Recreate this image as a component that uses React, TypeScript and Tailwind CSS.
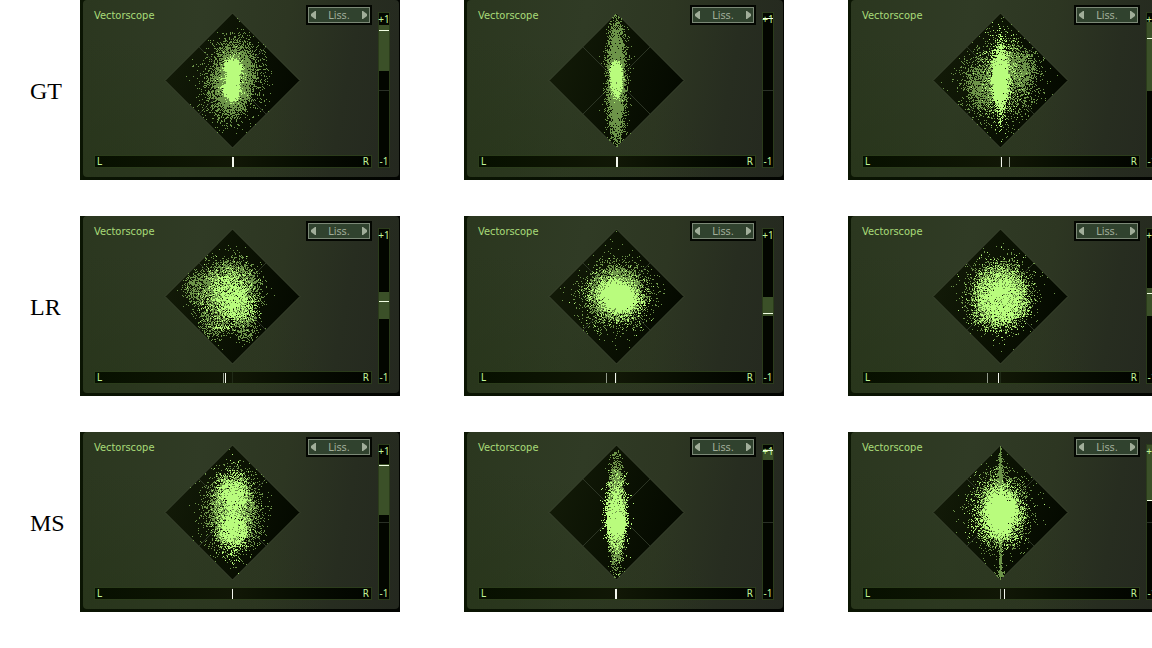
import { useMemo } from "react";

type Tone = "dim" | "bright";

/** A soft-edged ellipse of lit pixels, in pixels from the scope's centre. */
type Blob = {
  tone: Tone;
  x: number;
  y: number;
  rx: number;
  ry: number;
  soft: number;
  fill: number;
  tilt?: number;
};

type Marker = { at: number; width?: number; faint?: boolean };

type Scope = {
  id: string;
  seed: number;
  blobs: Blob[];
  balance: Marker[];
  range?: [number, number];
  level: number;
};

const blob = (
  tone: Tone,
  x: number,
  y: number,
  rx: number,
  ry: number,
  soft: number,
  fill: number,
  tilt = 0,
): Blob => ({ tone, x, y, rx, ry, soft, fill, tilt });

const ROWS: { label: string; scopes: Scope[] }[] = [
  {
    label: "GT",
    scopes: [
      {
        id: "gt-1",
        seed: 11,
        blobs: [
          blob("dim", 1, -1, 29, 41, 0.14, 0.36, -0.2),
          blob("dim", 0, -2, 20, 36, 0.12, 0.6, -0.15),
          blob("dim", 1, 0, 17, 29, 0.1, 0.75, -0.1),
          blob("bright", 0, -3, 12, 22, 0.1, 0.3),
          blob("bright", 0, -13, 9, 9, 0.08, 1),
          blob("bright", 0, -4, 7, 12, 0.1, 1),
          blob("bright", -1, 9, 9, 9, 0.08, 1),
          blob("bright", 0, 16, 6, 5, 0.1, 1),
        ],
        balance: [{ at: 152, width: 2 }],
        range: [25, 71],
        level: 30,
      },
      {
        id: "gt-2",
        seed: 22,
        blobs: [
          blob("dim", 0, 0, 11, 64, 0.14, 0.45),
          blob("dim", 0, 0, 8, 58, 0.1, 0.95),
          blob("bright", 0, -9, 7, 11, 0.07, 0.7),
          blob("bright", 0, 0, 6, 18, 0.08, 0.98),
        ],
        balance: [{ at: 152, width: 2 }],
        level: 18,
      },
      {
        id: "gt-3",
        seed: 33,
        blobs: [
          blob("dim", 0, 0, 34, 38, 0.16, 0.4, -0.4),
          blob("dim", 16, -10, 17, 20, 0.13, 0.72),
          blob("dim", -17, 5, 16, 20, 0.13, 0.6),
          blob("bright", 0, -4, 17, 36, 0.2, 0.16),
          blob("bright", 0, -3, 9, 32, 0.12, 0.85),
          blob("bright", 0, 1, 8, 22, 0.1, 0.98),
          blob("bright", 0, 0, 2, 48, 0.14, 0.5),
        ],
        balance: [{ at: 153 }, { at: 161, faint: true }],
        range: [22, 91],
        level: 38,
      },
    ],
  },
  {
    label: "LR",
    scopes: [
      {
        id: "lr-1",
        seed: 44,
        blobs: [
          blob("dim", -6, -2, 32, 35, 0.11, 0.36),
          blob("dim", -34, -8, 13, 15, 0.14, 0.55),
          blob("dim", 0, -8, 25, 27, 0.1, 0.6),
          blob("dim", -18, 26, 13, 17, 0.12, 0.4),
          blob("dim", 13, 26, 11, 18, 0.13, 0.5),
          blob("bright", -4, 0, 25, 27, 0.13, 0.22),
          blob("bright", -2, -4, 17, 18, 0.12, 0.6),
          blob("bright", 6, 10, 15, 14, 0.12, 0.55),
          blob("bright", -10, 31, 11, 2, 0.2, 0.45),
        ],
        balance: [{ at: 143, faint: true }, { at: 145 }],
        range: [76, 103],
        level: 85,
      },
      {
        id: "lr-2",
        seed: 55,
        blobs: [
          blob("dim", 0, -1, 32, 30, 0.18, 0.42),
          blob("dim", 0, -3, 25, 26, 0.11, 0.8, -0.4),
          blob("bright", 0, 0, 27, 22, 0.15, 0.3, -0.4),
          blob("bright", 1, 0, 20, 16, 0.12, 0.85, -0.4),
          blob("bright", 3, 1, 16, 13, 0.08, 1, -0.4),
        ],
        balance: [{ at: 142, faint: true }, { at: 151 }],
        range: [81, 100],
        level: 97,
      },
      {
        id: "lr-3",
        seed: 66,
        blobs: [
          blob("dim", 0, -1, 31, 34, 0.14, 0.42),
          blob("dim", 0, 0, 26, 29, 0.1, 0.75),
          blob("bright", 0, 1, 27, 32, 0.12, 0.3),
          blob("bright", 0, 2, 22, 25, 0.12, 0.58),
          blob("bright", 0, 3, 15, 17, 0.15, 0.65),
        ],
        balance: [{ at: 139, faint: true }, { at: 150 }],
        range: [72, 100],
        level: 77,
      },
    ],
  },
  {
    label: "MS",
    scopes: [
      {
        id: "ms-1",
        seed: 77,
        blobs: [
          blob("dim", 0, 0, 27, 39, 0.17, 0.42),
          blob("dim", 0, -1, 21, 35, 0.1, 0.72),
          blob("bright", 0, 0, 18, 40, 0.11, 0.3),
          blob("bright", 0, -18, 14, 15, 0.14, 0.75),
          blob("bright", 1, 17, 13, 14, 0.14, 0.82),
          blob("bright", 0, 0, 7, 20, 0.14, 0.55),
        ],
        balance: [{ at: 152 }],
        range: [32, 83],
        level: 33,
      },
      {
        id: "ms-2",
        seed: 88,
        blobs: [
          blob("dim", 0, 0, 7, 62, 0.12, 0.5),
          blob("dim", 0, 0, 9, 47, 0.1, 0.85),
          blob("bright", 0, 2, 12, 36, 0.15, 0.36),
          blob("bright", 0, 4, 9, 29, 0.12, 0.62),
          blob("bright", 0, 8, 9, 16, 0.12, 0.9),
        ],
        balance: [{ at: 151, width: 2 }],
        range: [17, 28],
        level: 18,
      },
      {
        id: "ms-3",
        seed: 99,
        blobs: [
          blob("dim", 0, -2, 27, 36, 0.17, 0.42),
          blob("dim", 0, -2, 19, 32, 0.12, 0.65),
          blob("dim", 0, 0, 2, 68, 0.08, 0.95),
          blob("dim", 0, 62, 4, 6, 0.2, 0.8),
          blob("dim", 0, -40, 3, 12, 0.2, 0.8),
          blob("bright", -1, 0, 24, 29, 0.13, 0.36),
          blob("bright", 0, 1, 17, 24, 0.11, 0.82),
          blob("bright", 0, 1, 13, 19, 0.1, 1),
        ],
        balance: [{ at: 152, faint: true }, { at: 156 }],
        range: [13, 69],
        level: 68,
      },
    ],
  },
];

const RADIUS = 67;
const BAR_START = 15;
const METER_START = 13;

function createRandom(seed: number) {
  let state = seed * 2654435761;
  return () => {
    state = (state + 0x6d2b79f5) | 0;
    let t = Math.imul(state ^ (state >>> 15), 1 | state);
    t = (t + Math.imul(t ^ (t >>> 7), 61 | t)) ^ t;
    return ((t ^ (t >>> 14)) >>> 0) / 4294967296;
  };
}

/** Lights pixels inside the diamond and returns one path per tone. */
function plot(scope: Scope): Record<Tone, string> {
  const random = createRandom(scope.seed);
  const paths: Record<Tone, string> = { dim: "", bright: "" };
  for (let y = -RADIUS; y <= RADIUS; y++) {
    for (let x = -RADIUS; x <= RADIUS; x++) {
      if (Math.abs(x) + Math.abs(y) > RADIUS) continue;
      let tone: Tone | null = null;
      for (const b of scope.blobs) {
        const c = Math.cos(b.tilt ?? 0);
        const s = Math.sin(b.tilt ?? 0);
        const dx = x - b.x;
        const dy = y - b.y;
        const r = Math.hypot((dx * c - dy * s) / b.rx, (dx * s + dy * c) / b.ry);
        if (random() < b.fill / (1 + Math.exp((r - 1) / b.soft))) tone = b.tone;
      }
      if (tone) paths[tone] += `M${x + RADIUS} ${y + RADIUS}h1v1h-1z`;
    }
  }
  return paths;
}

function Diamond({ scope }: { scope: Scope }) {
  const paths = useMemo(() => plot(scope), [scope]);
  const gradient = `scope-${scope.id}`;
  return (
    <svg
      className="mt-[13px] block h-[135px] w-[135px] overflow-visible"
      viewBox="0 0 135 135"
      role="img"
      aria-label="Stereo field"
    >
      <defs>
        <linearGradient id={gradient} x1="0" y1="0.3" x2="1" y2="0.6">
          <stop offset="0" stopColor="#131b08" />
          <stop offset="0.5" stopColor="#0b1203" />
          <stop offset="1" stopColor="#040900" />
        </linearGradient>
      </defs>
      <path d="M67.5 0L135 67.5L67.5 135L0 67.5Z" fill={`url(#${gradient})`} stroke="#3c4631" />
      <path d="M34 34L101 101M101 34L34 101" fill="none" stroke="#2c3524" />
      <g shapeRendering="crispEdges">
        <path d={paths.dim} fill="#6d9449" />
        <path d={paths.bright} fill="#b9fc7d" />
      </g>
    </svg>
  );
}

function ModeSelector() {
  return (
    <div className="mt-[5px] flex h-5 w-[66px] justify-self-end bg-[#030601] p-[2px]">
      <div className="flex flex-1 items-center justify-between border border-[#7c8977] bg-[#30422e] px-[2px] text-[#a1ae9a]">
        <button type="button" aria-label="Previous mode" className="block">
          <svg className="block h-[8px] w-[5px]" viewBox="0 0 5 8" fill="currentColor">
            <path d="M5 0V8H4L0 5V3L4 0Z" />
          </svg>
        </button>
        <span className="pt-px text-[11px] leading-[14px]">Liss.</span>
        <button type="button" aria-label="Next mode" className="block">
          <svg className="block h-[8px] w-[5px]" viewBox="0 0 5 8" fill="currentColor">
            <path d="M0 0V8H1L5 5V3L1 0Z" />
          </svg>
        </button>
      </div>
    </div>
  );
}

function BalanceBar({ markers }: { markers: Marker[] }) {
  return (
    <div className="mt-[7px] border border-[#2b3c1b] bg-[#040800]">
      <div className="relative flex h-[11px] items-center justify-between bg-linear-to-r from-[#071000] via-[#111706] to-[#020500] px-[2px] text-[10px] leading-[11px] text-[#c2f59a]">
        <span>L</span>
        <span>R</span>
        <i className="absolute inset-y-0 left-[137px] w-px bg-[#202a17]" />
        {markers.map((m) => (
          <i
            key={m.at}
            className={`absolute top-px bottom-0 ${m.width === 2 ? "w-[2px]" : "w-px"} ${m.faint ? "bg-[#929b8b]" : "bg-[#f4f8ee]"}`}
            style={{ left: m.at - BAR_START }}
          />
        ))}
      </div>
    </div>
  );
}

function CorrelationMeter({ range, level }: { range?: [number, number]; level: number }) {
  return (
    <div className="mt-3 flex h-[156px] w-3 shrink-0 border border-[#2b3c1b] bg-[#030600]">
      <div className="relative flex min-w-0 flex-1 flex-col items-center justify-between font-['Noto_Sans',sans-serif] text-[10px] leading-[12px] text-[#c2f59a]">
        <i className="absolute inset-x-0 top-[77px] h-px bg-[#2a3026]" />
        {range && (
          <i
            className="absolute inset-x-0 bg-[#3b5028]"
            style={{ top: range[0] - METER_START, height: range[1] - range[0] }}
          />
        )}
        <span className="relative">+1</span>
        <span className="relative">-1</span>
        <i className="absolute inset-x-0 h-px bg-[#f1ffe2]" style={{ top: level - METER_START }} />
      </div>
    </div>
  );
}

function Vectorscope({ scope }: { scope: Scope }) {
  return (
    <section className="w-80 shrink-0 bg-[#091003] bg-linear-to-r from-[#0b1503] to-[#020401] pr-px pb-[3px] pl-[3px] font-['DejaVu_Sans_Condensed','DejaVu_Sans',sans-serif]">
      <div className="flex h-[177px] gap-[6px] rounded-[4px] bg-[radial-gradient(ellipse_at_0%_95%,#26341899,transparent_55%),linear-gradient(100deg,#2b371f_0%,#303b25_35%,#2d3622_60%,#272d20_80%,#24281f_100%)] pr-[9px] pl-[11px]">
        <div className="flex-1">
          <div className="grid grid-cols-[71px_136px_71px] items-start">
            <h2 className="mt-[9px] text-[11px] leading-[14px] text-[#a9dc79]">Vectorscope</h2>
            <Diamond scope={scope} />
            <ModeSelector />
          </div>
          <BalanceBar markers={scope.balance} />
        </div>
        <CorrelationMeter range={scope.range} level={scope.level} />
      </div>
    </section>
  );
}

export default function App() {
  return (
    <main className="flex min-h-screen flex-col gap-9 overflow-x-hidden bg-white">
      {ROWS.map((row) => (
        <div key={row.label} className="flex items-center">
          <h1 className="w-20 shrink-0 pt-[2px] pl-[30px] font-['Liberation_Serif',serif] text-[24px] leading-8 text-black">
            {row.label}
          </h1>
          <div className="flex gap-16">
            {row.scopes.map((scope) => (
              <Vectorscope key={scope.id} scope={scope} />
            ))}
          </div>
        </div>
      ))}
    </main>
  );
}
